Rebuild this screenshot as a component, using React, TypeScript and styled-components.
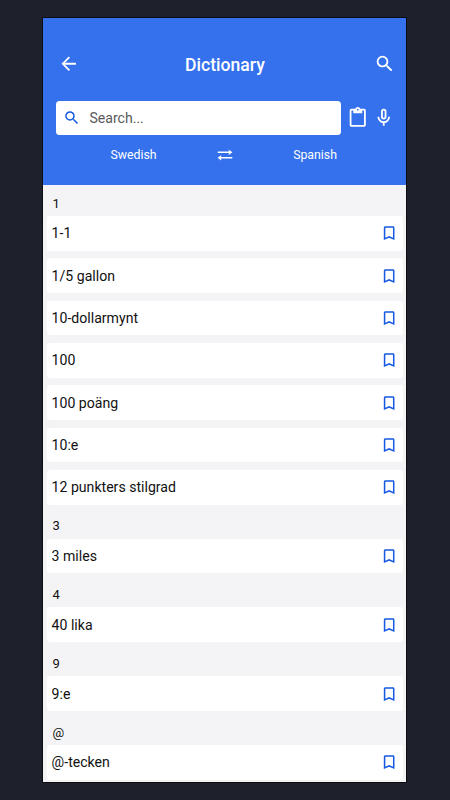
import React from "react";
import styled, { createGlobalStyle } from "styled-components";
import { MdArrowBack, MdSearch, MdContentPaste, MdBookmarkBorder } from "react-icons/md";

const GlobalStyle = createGlobalStyle`
  * { box-sizing: border-box; }
  body { margin: 0; background: #1e212c; font-family: Roboto, sans-serif; }
`;

const Page = styled.div`
  height: 800px;
  padding: 18px 43.7px 18px 43.3px;
  background: #1e212c;
  overflow: hidden;
`;

const Screen = styled.main`
  height: 764px;
  display: flex;
  flex-direction: column;
  background: #f4f4f7;
  box-shadow: 0 0 0 1px #0b0c12;
  overflow: hidden;
`;

const Header = styled.header`
  flex: none;
  height: 166.5px;
  padding-top: 28px;
  background: #3571ed;
  color: #fff;
`;

const TitleBar = styled.div`
  height: 36px;
  padding: 0 11px 0 14.3px;
  display: grid;
  grid-template-columns: 21.5px 1fr 21.5px;
  align-items: center;
`;

const Title = styled.h1`
  margin: 0;
  padding: 2px 3px 0 0;
  text-align: center;
  font-size: 17.6px;
  font-weight: 500;
  line-height: 22px;
`;

const IconButton = styled.button<{ $size: number }>`
  width: ${(p) => p.$size}px;
  height: ${(p) => p.$size}px;
  padding: 0;
  border: 0;
  background: none;
  color: inherit;
  display: flex;
  svg { width: 100%; height: 100%; }
`;

const SearchRow = styled.div`
  margin-top: 18.6px;
  padding: 0 11.5px 0 12.7px;
  display: flex;
  align-items: center;
`;

const SearchField = styled.div`
  width: 285px;
  height: 34.5px;
  padding-left: 6.8px;
  margin-right: 5.6px;
  display: flex;
  align-items: center;
  gap: 9px;
  border-radius: 3.5px;
  background: #fff;
  color: #5a5a5a;
  font-size: 14.1px;
  svg { width: 17.6px; height: 17.6px; color: #1659e2; }
`;

const Tools = styled.div`
  display: flex;
  gap: 4.8px;
`;

const Languages = styled.div`
  margin-top: 9.2px;
  height: 22px;
  display: grid;
  grid-template-columns: 1fr 16px 1fr;
  align-items: center;
  justify-items: center;
  font-size: 12.3px;
`;

const Language = styled.span<{ $side: "left" | "right" }>`
  padding: ${(p) => (p.$side === "left" ? "0 0 0 7px" : "0 9px 0 0")};
`;

const SwapIcon = styled.svg`
  width: 16px;
  height: 12px;
  overflow: visible;
`;

const Group = styled.section``;

const GroupLabel = styled.h2<{ $first: boolean }>`
  margin: 0;
  height: ${(p) => (p.$first ? 31.5 : 34)}px;
  padding: ${(p) => (p.$first ? 10 : 12.6)}px 0 0 9.3px;
  font-size: 13px;
  line-height: 18px;
  font-weight: 400;
  color: #111;
`;

const Entries = styled.div`
  padding: 0 3.6px 0 3.7px;
  display: flex;
  flex-direction: column;
  gap: 7.53px;
`;

const Entry = styled.div`
  height: 34.8px;
  padding: 0 4.2px 0 4.6px;
  display: flex;
  align-items: center;
  justify-content: space-between;
  border-radius: 3px;
  background: #fff;
  color: #111;
  font-size: 14.1px;
  svg { width: 18.3px; height: 18.3px; color: #1659e2; }
`;

const groups = [
  { label: "1", words: ["1-1", "1/5 gallon", "10-dollarmynt", "100", "100 poäng", "10:e", "12 punkters stilgrad"] },
  { label: "3", words: ["3 miles"] },
  { label: "4", words: ["40 lika"] },
  { label: "9", words: ["9:e"] },
  { label: "@", words: ["@-tecken"] },
];

export default function App() {
  return (
    <Page>
      <GlobalStyle />
      <Screen>
        <Header>
          <TitleBar>
            <IconButton $size={21.5} aria-label="Back"><MdArrowBack /></IconButton>
            <Title>Dictionary</Title>
            <IconButton $size={21.5} aria-label="Search"><MdSearch /></IconButton>
          </TitleBar>
          <SearchRow>
            <SearchField>
              <MdSearch />
              <span>Search...</span>
            </SearchField>
            <Tools>
              <IconButton $size={21.5} aria-label="Paste"><MdContentPaste /></IconButton>
              <IconButton $size={21.5} aria-label="Speak">
                <svg viewBox="0 0 24 24" fill="none" stroke="currentColor" strokeWidth="2">
                  <rect x="10" y="3" width="4" height="10" rx="2" />
                  <path d="M6 11a6 6 0 0 0 12 0M12 17v4" />
                </svg>
              </IconButton>
            </Tools>
          </SearchRow>
          <Languages>
            <Language $side="left">Swedish</Language>
            <SwapIcon viewBox="0 0 16 12">
              <path d="M.7 3.3h12M3.3 8.8h12" stroke="currentColor" strokeWidth="1.4" />
              <path d="M11.8.7 15.4 3.3l-3.6 2.6zM4.2 6.2.6 8.8l3.6 2.6z" fill="currentColor" />
            </SwapIcon>
            <Language $side="right">Spanish</Language>
          </Languages>
        </Header>
        {groups.map((group, i) => (
          <Group key={group.label}>
            <GroupLabel $first={i === 0}>{group.label}</GroupLabel>
            <Entries>
              {group.words.map((word) => (
                <Entry key={word}>
                  <span>{word}</span>
                  <MdBookmarkBorder />
                </Entry>
              ))}
            </Entries>
          </Group>
        ))}
      </Screen>
    </Page>
  );
}
